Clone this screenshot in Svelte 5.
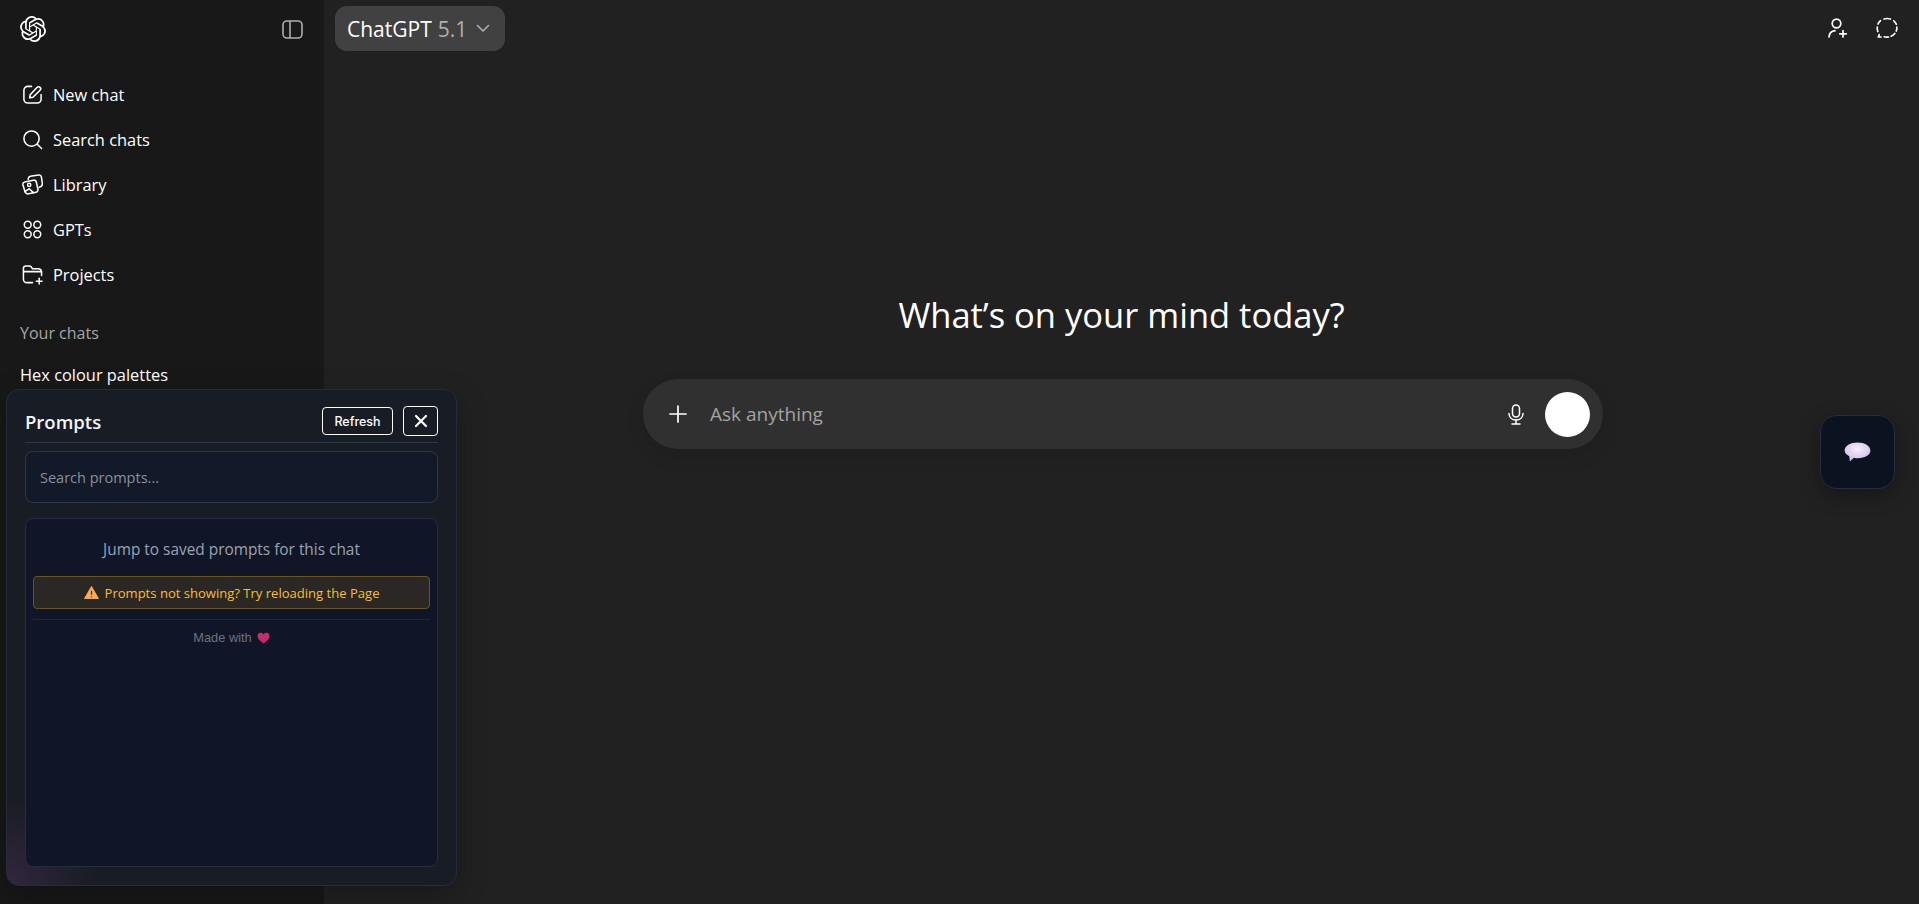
<script>
  const navItems = [
    { label: 'New chat', icon: 'edit' },
    { label: 'Search chats', icon: 'search' },
    { label: 'Library', icon: 'library' },
    { label: 'GPTs', icon: 'gpts' },
    { label: 'Projects', icon: 'projects' }
  ]
</script>

<div class="app">
  <aside class="sidebar">
    <div class="side-top">
      <svg class="logo" viewBox="0 0 24 24" fill="#fff"><path d="M22.282 9.821a5.985 5.985 0 0 0-.516-4.91 6.046 6.046 0 0 0-6.51-2.9A6.065 6.065 0 0 0 4.981 4.18a5.985 5.985 0 0 0-3.998 2.9 6.046 6.046 0 0 0 .743 7.097 5.98 5.98 0 0 0 .51 4.911 6.051 6.051 0 0 0 6.515 2.9A5.985 5.985 0 0 0 13.26 24a6.056 6.056 0 0 0 5.772-4.206 5.99 5.99 0 0 0 3.997-2.9 6.056 6.056 0 0 0-.747-7.073zM13.26 22.43a4.476 4.476 0 0 1-2.876-1.04l.141-.081 4.779-2.758a.795.795 0 0 0 .392-.681v-6.737l2.02 1.168a.071.071 0 0 1 .038.052v5.583a4.504 4.504 0 0 1-4.494 4.494zM3.6 18.304a4.47 4.47 0 0 1-.535-3.014l.142.085 4.783 2.759a.771.771 0 0 0 .78 0l5.843-3.369v2.332a.08.08 0 0 1-.033.062L9.74 19.95a4.5 4.5 0 0 1-6.14-1.646zM2.34 7.896a4.485 4.485 0 0 1 2.366-1.973V11.6a.766.766 0 0 0 .388.676l5.815 3.355-2.02 1.168a.076.076 0 0 1-.071 0l-4.83-2.786A4.504 4.504 0 0 1 2.34 7.872zm16.597 3.855l-5.833-3.387L15.119 7.2a.076.076 0 0 1 .071 0l4.83 2.791a4.494 4.494 0 0 1-.676 8.105v-5.678a.79.79 0 0 0-.407-.667zm2.01-3.023l-.141-.085-4.774-2.782a.776.776 0 0 0-.785 0L9.409 9.23V6.897a.066.066 0 0 1 .028-.061l4.83-2.787a4.5 4.5 0 0 1 6.68 4.66zm-12.64 4.135l-2.02-1.164a.08.08 0 0 1-.038-.057V6.075a4.5 4.5 0 0 1 7.375-3.453l-.142.08L8.704 5.46a.795.795 0 0 0-.393.681zm1.097-2.365l2.602-1.5 2.607 1.5v2.999l-2.597 1.5-2.607-1.5z"/></svg>
      <svg class="toggle" viewBox="0 0 21 19" fill="none" stroke="#afafaf" stroke-width="1.6"><rect x="1" y="1" width="19" height="17" rx="4"/><path d="M8 1v17"/></svg>
    </div>

    <nav class="nav">
      {#each navItems as item}
        <div class="nav-item">
          <svg class="nav-icon" viewBox="0 0 22 22" fill="none" stroke="#fff" stroke-width="1.6" stroke-linecap="round" stroke-linejoin="round">
            {#if item.icon === 'edit'}
              <path d="M10 2.500H6a4 4 0 0 0-4 4v9.500a4 4 0 0 0 4 4h10a4 4 0 0 0 4-4v-5"/>
              <path d="M8 14.500l.6-3.300 7.300-7.700a2 2 0 0 1 3 3l-7.400 7.300z"/>
            {:else if item.icon === 'search'}
              <circle cx="10" cy="10" r="8"/>
              <path d="M16 16l4.500 4.500"/>
            {:else if item.icon === 'library'}
              <path d="M2.500 8.500l9.500-2a2.500 2.500 0 0 1 3 1.900l1.700 7.600a2.500 2.500 0 0 1-1.900 3l-8 1.800a3 3 0 0 1-3.600-2.300L1 11.500a2.500 2.500 0 0 1 1.500-3z"/>
              <path d="M6.500 5.500l.2-1.200a2.500 2.500 0 0 1 2.100-2L17.500 1a2.500 2.500 0 0 1 2.800 2l1 6.500c.4 2.500-1.200 4-3.300 4.500"/>
              <circle cx="7.500" cy="11.500" r="1.700"/>
              <path d="M2.800 18.500l4.700-3 4.500 4"/>
            {:else if item.icon === 'gpts'}
              <circle cx="6" cy="6" r="3.600"/>
              <circle cx="16" cy="6" r="3.600"/>
              <circle cx="6" cy="16" r="3.600"/>
              <circle cx="16" cy="16" r="3.600"/>
            {:else}
              <path d="M11 19.500H5a3.500 3.500 0 0 1-3.500-3.500V4.500A2.500 2.500 0 0 1 4 2h3.500c1 0 1.700.4 2.300 1.200L11 5h6a3.500 3.500 0 0 1 3.500 3v4"/>
              <path d="M2 8h18"/>
              <path d="M18 15v6M15 18h6"/>
            {/if}
          </svg>
          <span>{item.label}</span>
        </div>
      {/each}
    </nav>

    <div class="section-label">Your chats</div>
    <div class="chat-item">Hex colour palettes</div>
  </aside>

  <main class="main">
    <header class="topbar">
      <button class="model">
        <span>ChatGPT</span> <span class="version">5.1</span>
        <svg class="chev" viewBox="0 0 14 9" fill="none" stroke="#afafaf" stroke-width="1.600" stroke-linecap="round" stroke-linejoin="round"><path d="M1.500 1.500L7 7l5.500-5.500"/></svg>
      </button>
      <div class="top-actions">
        <svg viewBox="0 0 22 22" fill="none" stroke="#fff" stroke-width="1.700" stroke-linecap="round"><circle cx="9.500" cy="6.500" r="4.300"/><path d="M2 20c.4-3.700 2.500-6 6-6.300"/><path d="M16 13.500v6.500M12.800 16.800h6.500"/></svg>
        <svg viewBox="0 0 22 22" fill="none" stroke="#fff" stroke-width="1.700" stroke-linecap="round"><path d="M8 2c2-.6 4.500-.6 6.500 0M17.800 3.800c1.200 1 2 2.200 2.500 3.500M20.800 10c.2 1.400 0 2.800-.5 4M18.800 16.500c-1 1.200-2.200 2.100-3.700 2.700M12.500 20c-1.500.2-3 .2-4.300-.2M5 20H2.500l.7-2.500M1.800 14.500c-.6-1.500-.7-3.200-.5-4.500M2 7c.5-1.300 1.300-2.400 2.500-3.400"/></svg>
      </div>
    </header>

    <section class="hero">
      <h1>What’s on your mind today?</h1>
      <div class="composer">
        <svg class="plus" viewBox="0 0 18 18" fill="none" stroke="#fff" stroke-width="1.700" stroke-linecap="round"><path d="M9 1v16M1 9h16"/></svg>
        <span class="placeholder">Ask anything</span>
        <svg class="mic" viewBox="0 0 16 21" fill="none" stroke="#fff" stroke-width="1.500" stroke-linecap="round"><rect x="4.500" y="1" width="7" height="12" rx="3.500"/><path d="M1 9.500c0 4 3 6.500 7 6.500s7-2.500 7-6.500"/><path d="M8 16v4M4 20h8"/></svg>
        <span class="send"></span>
      </div>
    </section>
  </main>

  <!-- floating extension panel, sits over the sidebar -->
  <div class="panel">
    <div class="panel-head">
      <strong>Prompts</strong>
      <div class="panel-btns">
        <button class="refresh">Refresh</button>
        <button class="close" aria-label="Close">
          <svg viewBox="0 0 14 14" fill="none" stroke="#fff" stroke-width="2.200" stroke-linecap="round"><path d="M2 2l10 10M12 2L2 12"/></svg>
        </button>
      </div>
    </div>
    <div class="search">Search prompts...</div>
    <div class="box">
      <p class="hint">Jump to saved prompts for this chat</p>
      <div class="warn">
        <svg viewBox="0 0 16 14" width="15" height="13"><path d="M8 .5L15.500 13.500H.5z" fill="#f6ad55" stroke="#f6ad55" stroke-linejoin="round"/><path d="M8 5v4.500M8 11v1.200" stroke="#3a2c12" stroke-width="1.300"/></svg>
        <span>Prompts not showing? Try reloading the Page</span>
      </div>
      <div class="made">Made with
        <svg viewBox="0 0 14 13" width="13" height="12">
          <defs>
            <linearGradient id="heart" x1="0" y1="0" x2="0" y2="1">
              <stop offset="0" stop-color="#b23a62"/>
              <stop offset="1" stop-color="#d01f7c"/>
            </linearGradient>
          </defs>
          <path d="M7 12.500C3 9.500.5 7.300.5 4.300A3.500 3.500 0 0 1 7 2.500a3.500 3.500 0 0 1 6.500 1.800c0 3-2.500 5.200-6.500 8.200z" fill="url(#heart)"/>
        </svg>
      </div>
    </div>
  </div>

  <button class="fab" aria-label="Open prompts">
    <svg viewBox="0 0 28 22" width="27" height="21">
      <defs>
        <radialGradient id="bub" cx="0.5" cy="0.35" r="0.7">
          <stop offset="0" stop-color="#f5f0fb"/>
          <stop offset="1" stop-color="#c9b6e6"/>
        </radialGradient>
      </defs>
      <path d="M14 .5c7.500 0 13.500 3.500 13.500 8.500s-6 8-13 8c-1.500 0-3-.1-4.300-.5L6 20.500l-.6-5.500C2.500 13.500.5 11.500.5 9 .5 4 6.500.5 14 .5z" fill="url(#bub)"/>
    </svg>
  </button>
</div>

<style>
  :global(body) {
    margin: 0;
    background: #212121;
    font-family: "Open Sans", "Noto Sans", sans-serif;
    color: #fff;
  }
  .app {
    display: flex;
    height: 904px;
    overflow: hidden;
    position: relative;
  }
  button {
    font: inherit;
    color: inherit;
    background: none;
    border: 0;
    padding: 0;
  }

  .sidebar {
    width: 324px;
    flex: none;
    background: #181818;
    box-sizing: border-box;
  }
  .side-top {
    display: flex;
    align-items: center;
    justify-content: space-between;
    box-sizing: border-box;
    padding: 0 21px 0 20px;
    height: 58px;
  }
  .logo {
    width: 26px;
    height: 26px;
  }
  .toggle {
    width: 21px;
    height: 19px;
  }
  .nav {
    display: flex;
    flex-direction: column;
    margin-top: 14px;
  }
  .nav-item {
    display: flex;
    align-items: center;
    gap: 10px;
    height: 45px;
    padding-left: 22px;
    font-size: 16.400px;
  }
  .nav-icon {
    width: 21px;
    height: 21px;
    flex: none;
  }
  .section-label {
    margin-top: 25px;
    padding-left: 20px;
    font-size: 16px;
    line-height: 22px;
    color: #a5a5a5;
  }
  .chat-item {
    margin-top: 20px;
    padding-left: 20px;
    font-size: 16.400px;
    line-height: 22px;
  }

  .main {
    flex: 1;
    display: flex;
    flex-direction: column;
    min-width: 0;
  }
  .topbar {
    display: flex;
    justify-content: space-between;
    align-items: flex-start;
    padding: 6px 21px 0 11px;
  }
  .model {
    display: flex;
    align-items: center;
    gap: 6px;
    height: 45px;
    padding: 0 15px 0 12px;
    background: #414141;
    border-radius: 12px;
    font-size: 21px;
  }
  .version {
    color: #afafaf;
  }
  .chev {
    width: 14px;
    height: 9px;
    margin-left: 3px;
  }
  .top-actions {
    display: flex;
    gap: 27px;
    padding-top: 11px;
  }
  .top-actions svg {
    width: 22px;
    height: 22px;
  }

  .hero {
    display: flex;
    flex-direction: column;
    align-items: center;
    padding-top: 242px;
  }
  h1 {
    margin: 0;
    font-size: 34.500px;
    font-weight: 400;
    line-height: 44px;
  }
  .composer {
    display: flex;
    align-items: center;
    box-sizing: border-box;
    width: 960px;
    height: 70px;
    margin: 42px 0 0 3px;
    padding: 0 13px 0 26px;
    background: #303030;
    border-radius: 35px;
    box-shadow: 0 8px 20px rgba(0, 0, 0, 0.08);
  }
  .plus {
    width: 18px;
    height: 18px;
    flex: none;
  }
  .placeholder {
    flex: 1;
    margin-left: 23px;
    font-size: 19px;
    color: #a3a3a3;
  }
  .mic {
    width: 16px;
    height: 21px;
    margin-right: 21px;
  }
  .send {
    width: 45px;
    height: 45px;
    border-radius: 50%;
    background: #fff;
  }

  .panel {
    position: absolute;
    left: 6px;
    top: 389px;
    width: 451px;
    height: 497px;
    box-sizing: border-box;
    padding: 0 18px 18px;
    display: flex;
    flex-direction: column;
    background:
      radial-gradient(circle at 0 100%, rgba(92, 56, 110, 0.38), transparent 90px),
      #181c24;
    border: 1px solid #262c3a;
    border-radius: 13px;
    box-shadow: 0 10px 30px rgba(0, 0, 0, 0.25);
  }
  .panel-head {
    display: flex;
    justify-content: space-between;
    align-items: center;
    height: 53px;
    flex: none;
    border-bottom: 1px solid #2e3545;
    padding-top: 10px;
    box-sizing: border-box;
  }
  .panel-head strong {
    font-size: 18.500px;
    font-weight: 600;
    color: #f4f5f7;
  }
  .panel-btns {
    display: flex;
    align-items: center;
    gap: 10px;
  }
  .refresh {
    width: 71px;
    height: 28px;
    box-sizing: border-box;
    border: 1px solid #fff;
    border-radius: 4px;
    font-family: "Inter", sans-serif;
    font-size: 12.500px;
    font-weight: 500;
  }
  .close {
    display: flex;
    align-items: center;
    justify-content: center;
    width: 35px;
    height: 30px;
    box-sizing: border-box;
    border: 1px solid #fff;
    border-radius: 4px;
  }
  .close svg {
    width: 14px;
    height: 14px;
  }
  .search {
    margin-top: 8px;
    height: 52px;
    box-sizing: border-box;
    flex: none;
    padding: 0 15px 0 14px;
    display: flex;
    align-items: center;
    background: #121929;
    border: 1px solid #2e3648;
    border-radius: 8px;
    font-size: 14.500px;
    color: #8b8f9a;
  }
  .box {
    flex: 1;
    margin-top: 15px;
    padding: 0 7px;
    background: #101627;
    border: 1px solid #252c3d;
    border-radius: 8px;
  }
  .hint {
    margin: 20px 0 15px;
    text-align: center;
    font-size: 15.400px;
    line-height: 22px;
    color: #9aa3b2;
  }
  .warn {
    display: flex;
    align-items: center;
    justify-content: center;
    gap: 6px;
    height: 33px;
    box-sizing: border-box;
    background: #2a2725;
    border: 1px solid #6a5420;
    border-radius: 4px;
    font-size: 13.050px;
    color: #fbbf24;
  }
  .made {
    display: flex;
    align-items: center;
    justify-content: center;
    gap: 5px;
    margin-top: 10px;
    padding-top: 10px;
    border-top: 1px solid #1f2638;
    font-family: "Liberation Sans", sans-serif;
    font-size: 12.800px;
    color: #6b7280;
  }

  .fab {
    position: absolute;
    left: 1820px;
    top: 415px;
    width: 75px;
    height: 74px;
    display: flex;
    align-items: center;
    justify-content: center;
    box-sizing: border-box;
    background: #0b1220;
    border: 1px solid #252d3e;
    border-radius: 17px;
    box-shadow: 0 6px 20px rgba(0, 0, 0, 0.35);
  }
</style>
